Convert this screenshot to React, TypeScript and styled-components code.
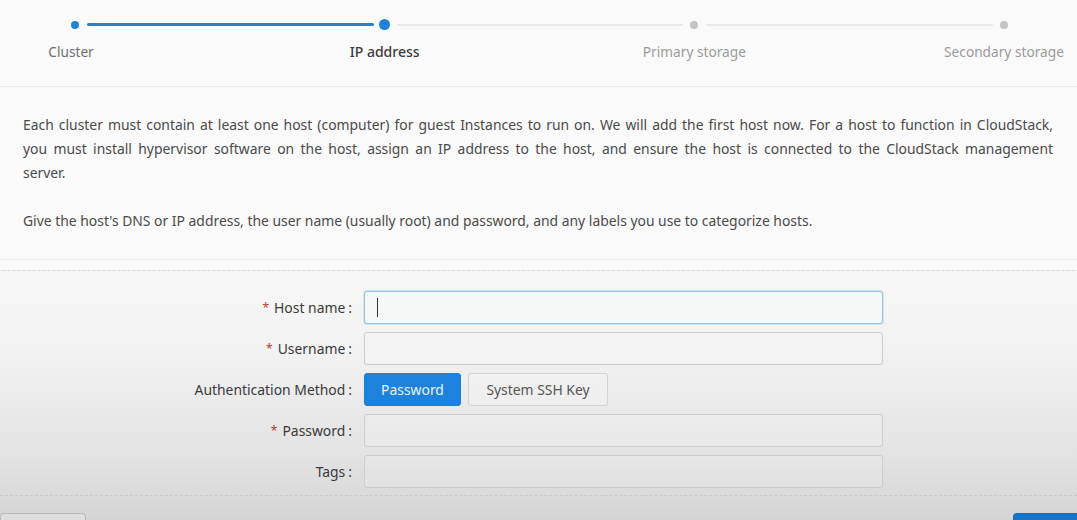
import styled, { createGlobalStyle } from "styled-components";

const GlobalStyle = createGlobalStyle`
  html, body {
    margin: 0;
    padding: 0;
    background: #fafafa;
    overflow: hidden;
  }
  body {
    font-family: "Noto Sans", "Open Sans", sans-serif;
    color: #444;
  }
`;

const Page = styled.div`
  width: 1077px;
  height: 520px;
  overflow: hidden;
  display: flex;
  flex-direction: column;
  background: #fafafa;
`;

const StepsBar = styled.div`
  flex-shrink: 0;
  height: 87px;
  box-sizing: border-box;
  padding: 19px 67px 0 69px;
  border-bottom: 1px solid #ececec;
`;

const StepGrid = styled.div`
  display: grid;
  grid-template-columns: 12px 1fr 12px 1fr 12px 1fr 12px;
  align-items: center;
`;

const Dot = styled.div<{ $state: "done" | "active" | "wait" }>`
  justify-self: center;
  width: ${p => (p.$state === "active" ? 11 : 8)}px;
  height: ${p => (p.$state === "active" ? 11 : 8)}px;
  border-radius: 50%;
  background: ${p => (p.$state === "wait" ? "#c4c4c4" : "#1f82db")};
`;

const Tail = styled.div<{ $done?: boolean }>`
  height: ${p => (p.$done ? 3 : 2)}px;
  margin: 0 5px 0 6px;
  border-radius: 2px;
  background: ${p => (p.$done ? "#2f7fc3" : "#e9e9e9")};
`;

const StepLabel = styled.div<{ $state: "done" | "active" | "wait" }>`
  display: flex;
  justify-content: center;
  white-space: nowrap;
  margin-top: ${p => (p.$state === "active" ? 12 : 11)}px;
  margin-left: ${p => (p.$state === "done" ? -8 : 0)}px;
  font-size: ${p => (p.$state === "active" ? 14 : 13.7)}px;
  line-height: 20px;
  color: ${p => (p.$state === "active" ? "#3a3a3a" : p.$state === "done" ? "#6f6f6f" : "#9a9a9a")};
  font-weight: ${p => (p.$state === "active" ? 500 : 400)};
`;

const Intro = styled.div`
  flex-shrink: 0;
  padding: 26px 24px 26px 23px;
  border-bottom: 1px solid #ececec;
  font-size: 13.9px;
  line-height: 24px;
  color: #4a4a4a;
  p {
    margin: 0;
  }
  p + p {
    margin-top: 24px;
  }
`;

// the source wraps with a wider UI font, so lines are set explicitly
const Line = styled.span<{ $justify?: boolean }>`
  display: block;
  white-space: nowrap;
  text-align: ${p => (p.$justify ? "justify" : "left")};
  text-align-last: ${p => (p.$justify ? "justify" : "left")};
`;

const Lower = styled.div`
  flex: 1 0 auto;
  margin-top: 10px;
  border-top: 1px dashed #ebebeb;
  background: linear-gradient(180deg, #f7f7f7 0%, #f2f2f2 30%, #e3e3e3 70%, #d2d2d2 100%);
  display: flex;
  flex-direction: column;
`;

const Form = styled.div`
  display: grid;
  grid-template-columns: 344px 519px;
  column-gap: 12px;
  row-gap: 8px;
  padding: 20px 0 7px 8px;
  border-bottom: 1px dashed #c9c9c9;
`;

const Label = styled.label`
  display: flex;
  align-items: center;
  justify-content: flex-end;
  height: 33px;
  font-size: 13.9px;
  color: #3a3a3a;
  white-space: nowrap;
  &::after {
    content: ":";
    margin-left: 3px;
  }
`;

const Required = styled.span`
  color: #c0392b;
  font-size: 12px;
  margin-right: 5px;
`;

const Input = styled.div<{ $focused?: boolean }>`
  height: 33px;
  box-sizing: border-box;
  border-radius: 3px;
  border: 1px solid ${p => (p.$focused ? "#94c3df" : "#cdcdcd")};
  background: ${p => (p.$focused ? "#f6f7f7" : "rgba(255,255,255,0.15)")};
  box-shadow: ${p => (p.$focused ? "0 0 0 1px rgba(140,195,225,0.35)" : "none")};
  display: flex;
  align-items: center;
  padding-left: 12px;
`;

const Caret = styled.span`
  width: 1px;
  height: 19px;
  background: #333;
`;

const ToggleGroup = styled.div`
  display: flex;
  gap: 7px;
`;

const Toggle = styled.button<{ $active?: boolean }>`
  height: 33px;
  width: ${p => (p.$active ? 97 : 140)}px;
  box-sizing: border-box;
  padding: 0;
  border-radius: 3px;
  font-family: inherit;
  font-size: 13.9px;
  border: 1px solid ${p => (p.$active ? "#1a7fd6" : "#d2d2d2")};
  background: ${p => (p.$active ? "#1c82db" : "rgba(255,255,255,0.2)")};
  color: ${p => (p.$active ? "#eaf3fb" : "#555")};
`;

const Footer = styled.div`
  display: flex;
  justify-content: space-between;
  padding-top: 17px;
`;

const FooterButton = styled.div<{ $primary?: boolean }>`
  width: ${p => (p.$primary ? 72 : 86)}px;
  height: 20px;
  box-sizing: border-box;
  border-radius: 4px 4px 0 0;
  border: 1px solid ${p => (p.$primary ? "#1570c2" : "#b9b9b9")};
  border-bottom: none;
  background: ${p => (p.$primary ? "#1674c9" : "#dedede")};
  margin-right: ${p => (p.$primary ? -8 : 0)}px;
`;

type StepState = "done" | "active" | "wait";

const steps: { title: string; state: StepState }[] = [
  { title: "Cluster", state: "done" },
  { title: "IP address", state: "active" },
  { title: "Primary storage", state: "wait" },
  { title: "Secondary storage", state: "wait" },
];

export default function App() {
  return (
    <>
      <GlobalStyle />
      <Page>
        <StepsBar>
          <StepGrid>
            {steps.map((s, i) => (
              <>
                <Dot key={s.title} $state={s.state} />
                {i < steps.length - 1 && <Tail key={s.title + "-tail"} $done={s.state === "done"} />}
              </>
            ))}
          </StepGrid>
          <StepGrid>
            {steps.map((s, i) => (
              <>
                <StepLabel key={s.title} $state={s.state}>
                  {s.title}
                </StepLabel>
                {i < steps.length - 1 && <div key={s.title + "-gap"} />}
              </>
            ))}
          </StepGrid>
        </StepsBar>
        <Intro>
          <p>
            <Line $justify>
              Each cluster must contain at least one host (computer) for guest Instances to run on. We will add the first host now. For a host to
              function in CloudStack,
            </Line>
            <Line $justify>
              you must install hypervisor software on the host, assign an IP address to the host, and ensure the host is connected to the CloudStack
              management
            </Line>
            <Line>server.</Line>
          </p>
          <p>Give the host's DNS or IP address, the user name (usually root) and password, and any labels you use to categorize hosts.</p>
        </Intro>
        <Lower>
          <Form>
            <Label>
              <Required>*</Required>Host name
            </Label>
            <Input $focused>
              <Caret />
            </Input>
            <Label>
              <Required>*</Required>Username
            </Label>
            <Input />
            <Label>Authentication Method</Label>
            <ToggleGroup>
              <Toggle $active>Password</Toggle>
              <Toggle>System SSH Key</Toggle>
            </ToggleGroup>
            <Label>
              <Required>*</Required>Password
            </Label>
            <Input />
            <Label>Tags</Label>
            <Input />
          </Form>
          <Footer>
            <FooterButton />
            <FooterButton $primary />
          </Footer>
        </Lower>
      </Page>
    </>
  );
}
